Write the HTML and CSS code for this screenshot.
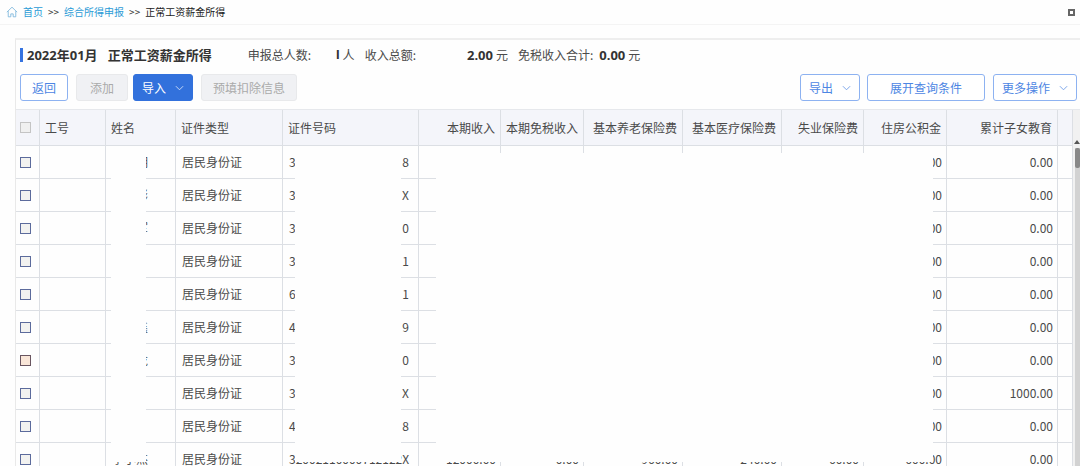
FILE: index.html
```html
<!DOCTYPE html>
<html lang="zh-CN">
<head>
<meta charset="utf-8">
<title>正常工资薪金所得</title>
<link rel="stylesheet" href="styles.css">
</head>
<body>
<header class="topbar">
  <svg class="home" viewBox="0 0 14 14" aria-hidden="true"><path d="M1 7.2 7 1.4l6 5.8M2.6 6v6.6h3V9.2h2.8v3.4h3V6"/></svg>
  <nav class="crumbs" aria-label="位置">
    <a href="#home">首页</a><span>&gt;&gt;</span><a href="#income">综合所得申报</a><span>&gt;&gt;</span><span class="current">正常工资薪金所得</span>
  </nav>
  <button class="restore" type="button" aria-label="还原窗口"></button>
</header>

<main class="panel">
  <section class="summary">
    <h1><span>2022年01月</span><span>正常工资薪金所得</span></h1>
    <p class="stat people"><span>申报总人数:</span><b>I</b><span>人</span></p>
    <p class="stat total"><span>收入总额:</span><b>2.00</b><span>元</span></p>
    <p class="stat exempt"><span>免税收入合计:</span><b>0.00</b><span>元</span></p>
  </section>

  <div class="toolbar">
    <button class="btn back" type="button">返回</button>
    <button class="btn add" type="button" disabled>添加</button>
    <button class="btn primary menu" type="button">导入<svg class="chev" viewBox="0 0 10 6" aria-hidden="true"><path d="m1 1 4 4 4-4"/></svg></button>
    <button class="btn prefill" type="button" disabled>预填扣除信息</button>
    <span class="spacer"></span>
    <button class="btn menu export" type="button">导出<svg class="chev" viewBox="0 0 10 6" aria-hidden="true"><path d="m1 1 4 4 4-4"/></svg></button>
    <button class="btn query" type="button">展开查询条件</button>
    <button class="btn menu more" type="button">更多操作<svg class="chev" viewBox="0 0 10 6" aria-hidden="true"><path d="m1 1 4 4 4-4"/></svg></button>
  </div>

  <div class="grid">
    <div class="sheet">
      <table>
        <colgroup>
          <col class="c-check"><col class="c-no"><col class="c-name"><col class="c-type"><col class="c-id">
          <col class="c-income"><col class="c-free"><col class="c-pension"><col class="c-medical">
          <col class="c-jobless"><col class="c-fund"><col class="c-child"><col>
        </colgroup>
        <thead>
          <tr>
            <th class="tick"><input type="checkbox" aria-label="全选" disabled></th>
            <th>工号</th><th>姓名</th><th>证件类型</th><th>证件号码</th>
            <th class="num">本期收入</th><th class="num">本期免税收入</th><th class="num">基本养老保险费</th><th class="num">基本医疗保险费</th>
            <th class="num">失业保险费</th><th class="num">住房公积金</th><th class="num">累计子女教育</th><th></th>
          </tr>
        </thead>
        <tbody>
          <tr><td class="tick"><input type="checkbox" aria-label="选择第1行"></td><td></td><td class="name">明</td><td>居民身份证</td><td><span class="id"><i>3</i><i>8</i></span></td><td></td><td></td><td></td><td></td><td></td><td class="num">00</td><td class="num">0.00</td><td></td></tr>
          <tr><td class="tick"><input type="checkbox" aria-label="选择第2行"></td><td></td><td class="name">彬</td><td>居民身份证</td><td><span class="id"><i>3</i><i>X</i></span></td><td></td><td></td><td></td><td></td><td></td><td class="num">00</td><td class="num">0.00</td><td></td></tr>
          <tr><td class="tick"><input type="checkbox" aria-label="选择第3行"></td><td></td><td class="name">军</td><td>居民身份证</td><td><span class="id"><i>3</i><i>0</i></span></td><td></td><td></td><td></td><td></td><td></td><td class="num">00</td><td class="num">0.00</td><td></td></tr>
          <tr><td class="tick"><input type="checkbox" aria-label="选择第4行"></td><td></td><td class="name"></td><td>居民身份证</td><td><span class="id"><i>3</i><i>1</i></span></td><td></td><td></td><td></td><td></td><td></td><td class="num">00</td><td class="num">0.00</td><td></td></tr>
          <tr><td class="tick"><input type="checkbox" aria-label="选择第5行"></td><td></td><td class="name"></td><td>居民身份证</td><td><span class="id"><i>6</i><i>1</i></span></td><td></td><td></td><td></td><td></td><td></td><td class="num">00</td><td class="num">0.00</td><td></td></tr>
          <tr><td class="tick"><input type="checkbox" aria-label="选择第6行"></td><td></td><td class="name">鑫</td><td>居民身份证</td><td><span class="id"><i>4</i><i>9</i></span></td><td></td><td></td><td></td><td></td><td></td><td class="num">00</td><td class="num">0.00</td><td></td></tr>
          <tr><td class="tick"><input class="hot" type="checkbox" aria-label="选择第7行"></td><td></td><td class="name">龙</td><td>居民身份证</td><td><span class="id"><i>3</i><i>0</i></span></td><td></td><td></td><td></td><td></td><td></td><td class="num">00</td><td class="num">0.00</td><td></td></tr>
          <tr><td class="tick"><input type="checkbox" aria-label="选择第8行"></td><td></td><td class="name"></td><td>居民身份证</td><td><span class="id"><i>3</i><i>X</i></span></td><td></td><td></td><td></td><td></td><td></td><td class="num">00</td><td class="num">1000.00</td><td></td></tr>
          <tr><td class="tick"><input type="checkbox" aria-label="选择第9行"></td><td></td><td class="name"></td><td>居民身份证</td><td><span class="id"><i>4</i><i>8</i></span></td><td></td><td></td><td></td><td></td><td></td><td class="num">00</td><td class="num">0.00</td><td></td></tr>
          <tr><td class="tick"><input type="checkbox" aria-label="选择第10行"></td><td></td><td class="name">李小杰</td><td>居民身份证</td><td><span class="id"><i>3</i><i>2002110000712122</i><i>X</i></span></td><td class="num">12000.00</td><td class="num">0.00</td><td class="num">960.00</td><td class="num">240.00</td><td class="num">60.00</td><td class="num">600.00</td><td class="num">0.00</td><td></td></tr>
        </tbody>
      </table>
      <div class="mask mask-name"></div>
      <div class="mask mask-id"></div>
      <div class="mask mask-money"></div>
    </div>
    <div class="scrollbar" aria-hidden="true">
      <svg class="up" viewBox="0 0 6 4"><path d="M0 4 3 0l3 4z"/></svg>
      <div class="track"><div class="thumb"></div></div>
    </div>
  </div>
</main>
</body>
</html>
```
FILE: styles.css
```css
* { box-sizing: border-box; }

body {
  margin: 0;
  height: 100vh;
  overflow: hidden;
  background: #fefefe;
  color: #4a4a4a;
  font: 12px/18px "Noto Sans CJK SC", sans-serif;
}

.topbar {
  display: flex;
  align-items: center;
  height: 25px;
  padding: 0 5px 0 6px;
  border-bottom: 1px solid #f4f4f4;
}

.home {
  width: 12px;
  height: 12px;
  margin-right: 5px;
  fill: none;
  stroke: #7cb7dc;
}

.crumbs {
  display: flex;
  flex: 1;
  gap: 5px;
  color: #333;
  font-size: 10px;
}

.crumbs a {
  color: #2a9bd6;
  text-decoration: none;
}

.current { color: #222; }

.restore {
  width: 7px;
  height: 7px;
  padding: 0;
  border: 2px solid #666;
  background: #fff;
}

.panel {
  margin: 13px 0 0 15px;
  border-top: 2px solid #eee;
  border-left: 1px solid #e9e9e9;
}

.summary {
  display: flex;
  align-items: center;
  height: 30px;
  padding-left: 4px;
}

h1 {
  display: flex;
  gap: 10px;
  margin: 0 36px 0 0;
  padding-left: 4px;
  border-left: 3px solid #3673e0;
  color: #333;
  font: bold 13px/14px "Noto Sans", "Noto Sans CJK SC", sans-serif;
}

.stat {
  display: flex;
  align-items: center;
  gap: 3px;
  margin: 0 10px 0 0;
}

.stat b {
  color: #333;
  font: bold 13px/18px "Noto Sans", sans-serif;
}

.stat.people b {
  margin-left: 22px;
  font-family: "Liberation Sans", sans-serif;
}

.total b { margin-left: 48px; }
.exempt b { margin-left: 3px; }

.toolbar {
  display: flex;
  align-items: center;
  height: 39px;
  padding: 0 3px 4px 4px;
}

.btn {
  display: flex;
  align-items: center;
  justify-content: center;
  height: 27px;
  padding: 0 8px;
  border: 1px solid #8db2f1;
  border-radius: 3px;
  background: #fff;
  color: #4d86e3;
  font: inherit;
}

.btn:disabled {
  border-color: #e8e9eb;
  background: #f0f1f4;
  color: #aaa;
}

.btn.primary {
  border-color: #3271dc;
  background: #3271dc;
  color: #fff;
}

.menu {
  justify-content: space-between;
  width: 60px;
}

.chev {
  width: 9px;
  height: 6px;
  fill: none;
  stroke: currentColor;
  opacity: 0.8;
}

.back { width: 48px; }
.add { width: 52px; margin: 0 5px 0 8px; }
.prefill { width: 96px; margin-left: 8px; }
.spacer { flex: 1; }
.query { width: 118px; margin: 0 8px 0 7px; }
.more { width: 84px; }

.grid {
  display: flex;
  border-top: 1px solid #e6e8ec;
}

.sheet {
  position: relative;
  flex: 1;
}

table {
  width: 100%;
  table-layout: fixed;
  border-collapse: separate;
  border-spacing: 0;
}

.c-check { width: 24px; }
.c-no { width: 66px; }
.c-name { width: 70px; }
.c-type { width: 107px; }
.c-id { width: 136px; }
.c-income { width: 82px; }
.c-free { width: 83px; }
.c-pension { width: 99px; }
.c-medical { width: 99px; }
.c-jobless { width: 82px; }
.c-fund { width: 83px; }
.c-child { width: 111px; }

th,
td {
  height: 33px;
  padding: 0 0 0 6px;
  border-right: 1px solid #dcdfe4;
  border-bottom: 1px solid #dcdfe4;
  text-align: left;
  font-weight: normal;
  white-space: nowrap;
}

th {
  height: 36px;
  padding-left: 5px;
  background: #f4f5fa;
}

th.num { padding: 0 5px 0 0; text-align: right; }
td.num { padding: 0 4px 0 0; text-align: right; }
.tick { padding: 0 0 0 4px; }
td.name { padding-right: 27px; text-align: right; }

input {
  display: block;
  width: 11px;
  height: 11px;
  margin: 0;
  border: 1px solid #5c6b9c;
  background: #f2f2f0;
  appearance: none;
}

input:disabled { border-color: #c4c4c4; background: #f0f0f0; }
input.hot { border-color: #695560; background: #f9e6d8; }

.id {
  display: flex;
  justify-content: space-between;
  padding-right: 9px;
}

.id i { font-style: normal; }

.mask {
  position: absolute;
  top: 43px;
  height: 309px;
  background: #fefefe;
}

.mask-name { left: 95px; width: 35px; }
.mask-id { left: 279px; width: 106px; }
.mask-money { left: 420px; width: 497px; }

.scrollbar {
  display: flex;
  flex-direction: column;
  width: 7px;
  padding-top: 30px;
  background: #f1f1f1;
}

.up {
  width: 6px;
  height: 4px;
  margin-left: 1px;
  fill: #555;
}

.track {
  flex: 1;
  margin-left: 2px;
  padding-top: 4px;
  background: linear-gradient(#f1f1f1 4px, #d2d2d2 4px);
}

.thumb {
  height: 20px;
  border-radius: 2px;
  background: #888;
}
```
